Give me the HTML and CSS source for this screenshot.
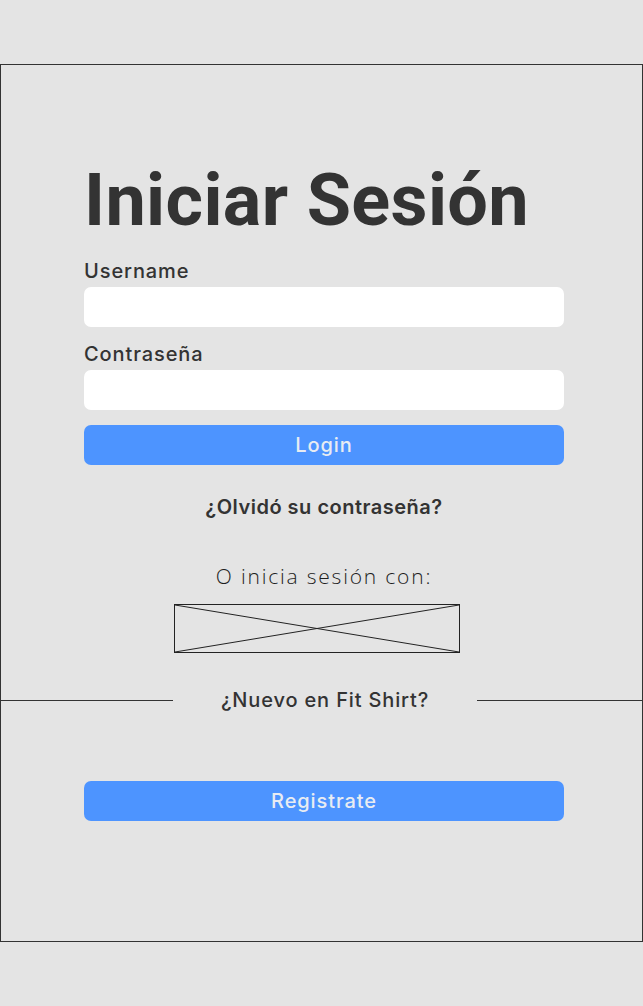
FILE: index.html
```html
<!DOCTYPE html>
<html lang="es">
<head>
<meta charset="utf-8">
<title>Iniciar Sesión</title>
<link rel="stylesheet" href="styles.css">
</head>
<body>
<main class="frame">
  <section class="content">
    <h1 class="title">Iniciar Sesión</h1>
    <label class="label" for="user">Username</label>
    <input class="field" id="user" type="text">
    <label class="label label-2" for="pass">Contraseña</label>
    <input class="field" id="pass" type="password">
    <button class="btn btn-login" type="button">Login</button>
    <a class="forgot" href="#">¿Olvidó su contraseña?</a>
    <p class="alt">O inicia sesión con:</p>
    <div class="placeholder">
      <svg class="ph-svg" viewBox="0 0 284 47" preserveAspectRatio="none">
        <line x1="0" y1="0" x2="284" y2="47" stroke="#222" stroke-width="1"/>
        <line x1="0" y1="47" x2="284" y2="0" stroke="#222" stroke-width="1"/>
      </svg>
    </div>
  </section>
  <div class="divider">
    <span class="line line-left"></span>
    <span class="divider-text">¿Nuevo en Fit Shirt?</span>
    <span class="line line-right"></span>
  </div>
  <section class="content content-bottom">
    <button class="btn btn-register" type="button">Registrate</button>
  </section>
</main>
</body>
</html>
```
FILE: styles.css
```css
html, body {
  margin: 0;
  padding: 0;
  background: #e4e4e4;
}
body {
  padding-top: 64px;
  height: 942px;
  font-family: Inter, "Open Sans", sans-serif;
  color: #333333;
}
.frame {
  box-sizing: border-box;
  width: 643px;
  height: 878px;
  border: 1px solid #333333;
  display: flex;
  flex-direction: column;
}
.content {
  display: flex;
  flex-direction: column;
  padding: 0 78px 0 83px;
}
.title {
  margin: 100px 0 0 0;
  font-family: Roboto, sans-serif;
  font-weight: 700;
  font-size: 72px;
  line-height: 72px;
  letter-spacing: 0.35px;
  color: #333333;
}
.label {
  display: block;
  margin-top: 23px;
  font-size: 20px;
  line-height: 22px;
  font-weight: 500;
  letter-spacing: 0.9px;
  color: #333333;
}
.label-2 {
  margin-top: 16px;
}
.field {
  box-sizing: border-box;
  display: block;
  margin: 5px 0 0 0;
  width: 480px;
  height: 40px;
  border: none;
  border-radius: 7px;
  background: #ffffff;
  outline: none;
}
.btn {
  box-sizing: border-box;
  width: 480px;
  height: 40px;
  border: none;
  border-radius: 7px;
  background: #4d94ff;
  color: #e8ecf2;
  font-family: Inter, "Open Sans", sans-serif;
  font-size: 20px;
  font-weight: 500;
  letter-spacing: 0.9px;
  padding: 0;
}
.btn-login {
  margin-top: 15px;
}
.forgot {
  margin-top: 31px;
  align-self: center;
  text-align: center;
  width: 480px;
  font-size: 20px;
  line-height: 22px;
  font-weight: 600;
  letter-spacing: 0.5px;
  color: #333333;
  text-decoration: none;
}
.alt {
  margin: 46px 0 0 0;
  text-align: center;
  width: 480px;
  font-family: "Open Sans", sans-serif;
  font-size: 21px;
  line-height: 24px;
  font-weight: 300;
  letter-spacing: 1.8px;
  color: #1e1e1e;
}
.placeholder {
  box-sizing: border-box;
  margin: 16px 0 0 90px;
  width: 286px;
  height: 49px;
  border: 1px solid #222222;
}
.ph-svg {
  display: block;
  width: 100%;
  height: 100%;
}
.divider {
  margin-top: 35px;
  display: flex;
  align-items: center;
  height: 24px;
}
.line {
  height: 1px;
  background: #333333;
}
.line-left {
  width: 172px;
}
.line-right {
  width: 165px;
}
.divider-text {
  flex: 1;
  text-align: center;
  font-size: 20px;
  line-height: 24px;
  font-weight: 500;
  letter-spacing: 0.85px;
  color: #333333;
}
.btn-register {
  margin-top: 69px;
}
```
